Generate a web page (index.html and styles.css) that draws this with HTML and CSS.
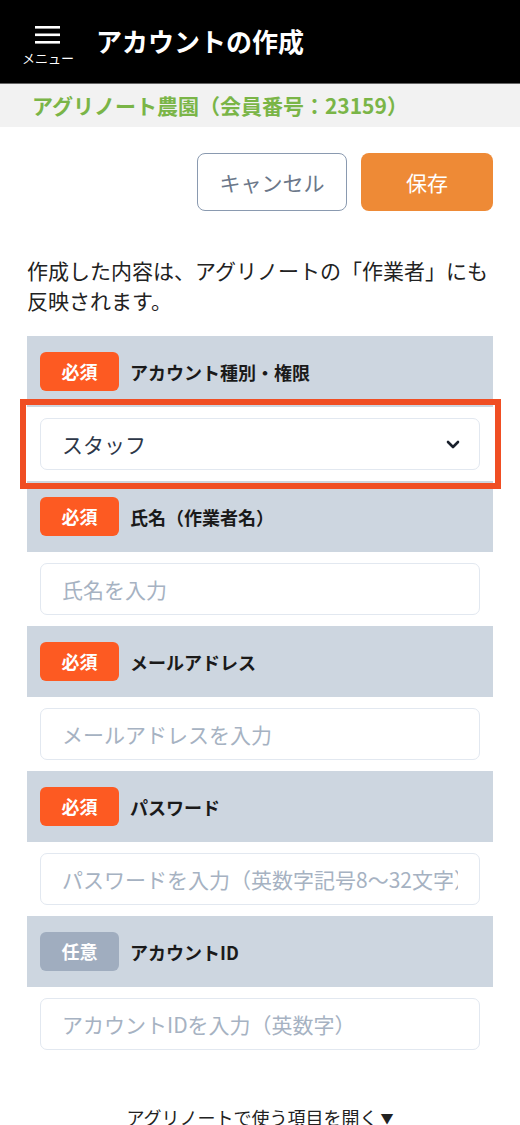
FILE: index.html
```html
<!DOCTYPE html>
<html lang="ja">
<head>
  <meta charset="UTF-8">
  <meta name="viewport" content="width=device-width, initial-scale=1.0">
  <title>アカウントの作成</title>
  <link rel="stylesheet" href="styles.css">
</head>
<body>

  <!-- Header -->
  <div class="header">
    <div class="menu-button">
      <svg class="menu-icon" width="26" height="18" viewBox="0 0 26 18">
        <rect x="0" y="0" width="25" height="2.6" fill="#fff"/>
        <rect x="0" y="7.5" width="25" height="2.6" fill="#fff"/>
        <rect x="0" y="15" width="25" height="2.6" fill="#fff"/>
      </svg>
      <span class="menu-label">メニュー</span>
    </div>
    <h1>アカウントの作成</h1>
  </div>

  <div class="farm-bar">アグリノート農園（会員番号：23159）</div>

  <div class="content">
    <div class="actions">
      <button class="btn-cancel">キャンセル</button>
      <button class="btn-save">保存</button>
    </div>

    <p class="note">作成した内容は、アグリノートの「作業者」にも反映されます。</p>

    <!-- Account type -->
    <div class="field">
      <div class="field-label">
        <span class="badge">必須</span>
        <span>アカウント種別・権限</span>
      </div>
      <div class="field-body highlighted">
        <div class="select-wrap">
          <select>
            <option>スタッフ</option>
            <option>管理者</option>
          </select>
          <svg class="chevron" width="14" height="9" viewBox="0 0 14 9">
            <path d="M2 2 L7 7 L12 2" fill="none" stroke="#1a202c" stroke-width="2.6" stroke-linecap="round" stroke-linejoin="round"/>
          </svg>
        </div>
      </div>
    </div>

    <!-- Name -->
    <div class="field">
      <div class="field-label">
        <span class="badge">必須</span>
        <span>氏名（作業者名）</span>
      </div>
      <div class="field-body">
        <input type="text" placeholder="氏名を入力">
      </div>
    </div>

    <!-- Mail -->
    <div class="field">
      <div class="field-label">
        <span class="badge">必須</span>
        <span>メールアドレス</span>
      </div>
      <div class="field-body">
        <input type="email" placeholder="メールアドレスを入力">
      </div>
    </div>

    <!-- Password -->
    <div class="field">
      <div class="field-label">
        <span class="badge">必須</span>
        <span>パスワード</span>
      </div>
      <div class="field-body">
        <input type="password" placeholder="パスワードを入力（英数字記号8〜32文字）">
      </div>
    </div>

    <!-- Account ID -->
    <div class="field">
      <div class="field-label">
        <span class="badge optional">任意</span>
        <span>アカウントID</span>
      </div>
      <div class="field-body">
        <input type="text" placeholder="アカウントIDを入力（英数字）">
      </div>
    </div>

    <div class="more-link">アグリノートで使う項目を開く<span class="arrow">▼</span></div>
  </div>

</body>
</html>
```

FILE: styles.css
```css
body {
  margin: 0;
  font-family: "Noto Sans CJK JP", "Noto Sans", sans-serif;
  color: #1a202c;
  background-color: #fff;
}
.header {
  height: 84px;
  background-color: #000;
  display: flex;
  align-items: center;
  padding-left: 22px;
  gap: 22px;
  border-bottom: 1px solid #666;
  box-sizing: border-box;
}
.menu-button {
  width: 52px;
  display: flex;
  flex-direction: column;
  align-items: center;
  padding-top: 8px;
}
.menu-icon {
  display: block;
}
.menu-label {
  color: #fff;
  font-size: 13px;
  line-height: 15px;
  margin-top: 6px;
}
.header h1 {
  margin: 0;
  color: #fff;
  font-size: 26px;
  font-weight: bold;
  padding-bottom: 2px;
}
.farm-bar {
  height: 43px;
  line-height: 43px;
  background-color: #f2f2f2;
  color: #7ab547;
  font-weight: bold;
  font-size: 21px;
  padding-left: 32px;
}
.content {
  padding: 0 27px;
}
.actions {
  display: flex;
  justify-content: flex-end;
  gap: 14px;
  margin-top: 26px;
}
.actions button {
  height: 58px;
  font-family: inherit;
  font-size: 21px;
  border-radius: 8px;
  cursor: pointer;
}
.btn-cancel {
  width: 150px;
  background-color: #fff;
  color: #6b7789;
  border: 1.5px solid #8a9ab0;
}
.btn-save {
  width: 132px;
  background-color: #ee8a36;
  color: #fff;
  border: none;
}
.note {
  margin: 44px 0 21px;
  font-size: 21px;
  line-height: 30px;
  color: #222;
}
.field-label {
  height: 71px;
  background-color: #cdd6e0;
  display: flex;
  align-items: center;
  padding-left: 13px;
  gap: 11px;
  font-size: 18px;
  font-weight: bold;
  color: #1a1a1a;
}
.badge {
  width: 79px;
  height: 39px;
  line-height: 39px;
  text-align: center;
  border-radius: 6px;
  background-color: #fd5a22;
  color: #fff;
  font-size: 18px;
}
.badge.optional {
  background-color: #a0adbf;
}
.field-body {
  padding: 11px 13px;
  background-color: #fff;
}
.field-body.highlighted {
  position: relative;
}
.field-body.highlighted::after {
  content: "";
  position: absolute;
  top: -8px;
  left: -7px;
  right: -8px;
  bottom: -8px;
  border: 6px solid #f04e23;
  pointer-events: none;
}
.field-body input,
.field-body select {
  display: block;
  width: 100%;
  height: 52px;
  box-sizing: border-box;
  border: 1px solid #e2e8f0;
  border-radius: 7px;
  padding: 0 21px;
  font-family: inherit;
  font-size: 21px;
  color: #2d3748;
  background-color: #fff;
}
.field-body input::placeholder {
  color: #a6b2c2;
}
.select-wrap {
  position: relative;
}
.field-body select {
  appearance: none;
  -webkit-appearance: none;
}
.chevron {
  position: absolute;
  right: 20px;
  top: 22px;
}
.more-link {
  margin-top: 43px;
  text-align: center;
  font-size: 18px;
  color: #222;
}
.more-link .arrow {
  font-size: 13px;
  margin-left: 3px;
  vertical-align: 2px;
}
```
